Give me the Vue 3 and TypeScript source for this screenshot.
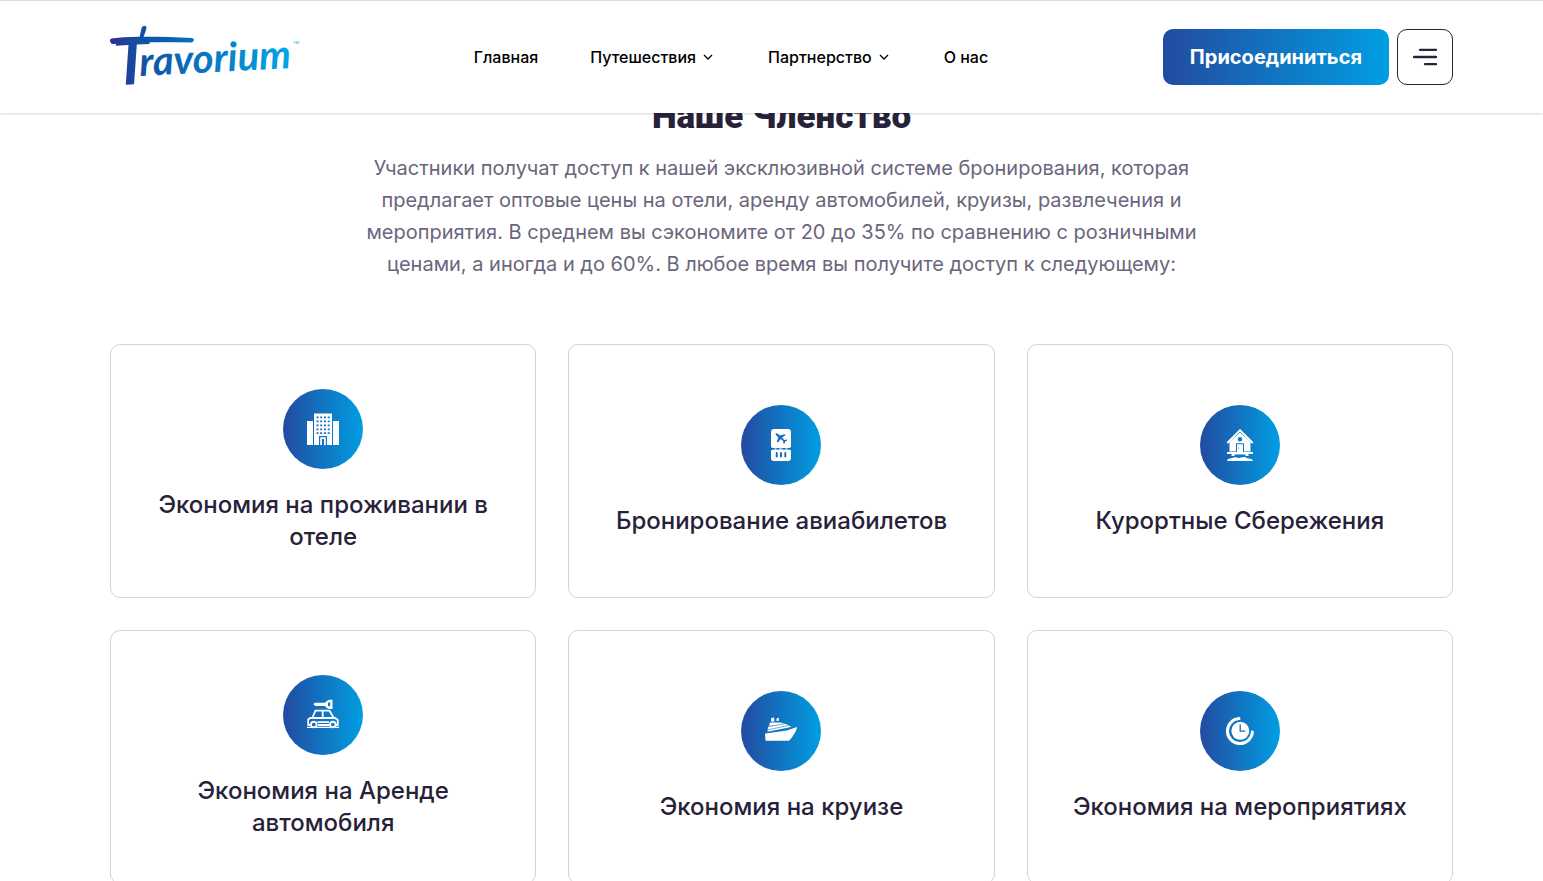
<script setup lang="ts">
interface NavItem {
  label: string
  menu: boolean
}

interface Benefit {
  title: string
  icon: 'hotel' | 'ticket' | 'resort' | 'car' | 'cruise' | 'events'
}

const navItems: NavItem[] = [
  { label: 'Главная', menu: false },
  { label: 'Путешествия', menu: true },
  { label: 'Партнерство', menu: true },
  { label: 'О нас', menu: false },
]

const benefits: Benefit[] = [
  { title: 'Экономия на проживании в отеле', icon: 'hotel' },
  { title: 'Бронирование авиабилетов', icon: 'ticket' },
  { title: 'Курортные Сбережения', icon: 'resort' },
  { title: 'Экономия на Аренде автомобиля', icon: 'car' },
  { title: 'Экономия на круизе', icon: 'cruise' },
  { title: 'Экономия на мероприятиях', icon: 'events' },
]
</script>

<template>
  <div class="page">
    <header class="header">
      <a class="logo" href="#" aria-label="Travorium">
        <svg width="189" height="96" viewBox="0 0 189 96" aria-hidden="true">
          <defs>
            <linearGradient id="brand" gradientUnits="userSpaceOnUse" x1="0" y1="0" x2="182" y2="0">
              <stop offset="0" stop-color="#2e3192" />
              <stop offset="0.2" stop-color="#0d55a6" />
              <stop offset="1" stop-color="#00a7e7" />
            </linearGradient>
          </defs>
          <path class="swash" d="M0 31 Q0 29 6 29 C30 27 55 28 82 29 Q86 30 82 33.500 C55 33 28 33 3 35 Q0 35 0 31z" />
          <path class="swash" d="M29 31 L31.500 19 Q34 15 36.500 18 L36 21 L32.500 31z" />
          <g class="wordmark" transform="rotate(-3 30 66)">
            <text class="initial" x="4" y="75">T</text>
            <text class="rest" x="30" y="67">ravorium</text>
          </g>
          <text class="mark" x="183" y="35">TM</text>
        </svg>
      </a>

      <nav class="nav" aria-label="Основное меню">
        <a v-for="item in navItems" :key="item.label" class="nav-link" href="#">
          {{ item.label }}
          <svg v-if="item.menu" class="chevron" width="16" height="16" viewBox="0 0 16 16" aria-hidden="true">
            <path d="M4 6 L8 10 L12 6" />
          </svg>
        </a>
      </nav>

      <div class="actions">
        <button class="join" type="button">Присоединиться</button>
        <button class="burger" type="button" aria-label="Меню">
          <svg width="24" height="24" viewBox="0 0 24 24" aria-hidden="true">
            <path stroke-width="2.300" d="M7 4.800 H23 M1 12 H23 M12 19.200 H23" />
          </svg>
        </button>
      </div>
    </header>

    <main class="membership">
      <h2 class="heading">Наше Членство</h2>
      <p class="lead">
        Участники получат доступ к нашей эксклюзивной системе бронирования, которая предлагает
        оптовые цены на отели, аренду автомобилей, круизы, развлечения и мероприятия. В среднем вы
        сэкономите от 20 до 35% по сравнению с розничными ценами, а иногда и до 60%. В любое время
        вы получите доступ к следующему:
      </p>

      <div class="grid">
        <article v-for="benefit in benefits" :key="benefit.icon" class="card">
          <div class="badge">
            <svg width="32" height="32" viewBox="0 0 32 32" aria-hidden="true">
              <g v-if="benefit.icon === 'hotel'">
                <path
                  fill="#fff"
                  fill-rule="evenodd"
                  d="M0 8h6v24H0z M26 8h6v24h-6z M7 .5h18V32h-5v-9h-8v9H7z M9.5 3.500v1.800h2v-1.800z M13.200 3.500v1.800h2v-1.800z M17 3.500v1.800h2v-1.800z M20.700 3.500v1.800h2v-1.800z M9.500 7.500v1.800h2v-1.800z M13.200 7.500v1.800h2v-1.800z M17 7.500v1.800h2v-1.800z M20.700 7.500v1.800h2v-1.800z M9.500 11.500v1.800h2v-1.800z M13.200 11.500v1.800h2v-1.800z M17 11.500v1.800h2v-1.800z M20.700 11.500v1.800h2v-1.800z M9.500 15.500v1.800h2v-1.800z M13.200 15.500v1.800h2v-1.800z M17 15.500v1.800h2v-1.800z M20.700 15.500v1.800h2v-1.800z M9.500 19.300v1.800h2v-1.800z M13.200 19.300v1.800h2v-1.800z M17 19.300v1.800h2v-1.800z M20.700 19.300v1.800h2v-1.800z"
                />
                <path fill="#fff" d="M13.200 24.300h5.600V32h-1.800v-6h-2v6h-1.800z" />
              </g>

              <g v-else-if="benefit.icon === 'ticket'">
                <path
                  fill="#fff"
                  d="M9 0h14a3 3 0 0 1 3 3v15.300a1.700 1.700 0 0 0-1.500 1.200H7.500A1.700 1.700 0 0 0 6 18.300V3a3 3 0 0 1 3-3z M6 21.200a1.700 1.700 0 0 0 1.500-.9h17a1.700 1.700 0 0 0 1.500.9V29a3 3 0 0 1-3 3H9a3 3 0 0 1-3-3z"
                />
                <path stroke="#0f6dbb" stroke-width="1.400" d="M6.500 19.800h3 M11.500 19.800h2.500 M17.500 19.800h3 M22.500 19.800h3" />
                <path
                  fill="#0f6dbb"
                  d="M10.600 4.200 Q12.300 4 13.500 5.200 L15 6.600 L19.500 5.300 L20.500 6.300 L17 8.600 L19.300 10.900 L21.700 10.600 L22.300 11.300 L20.300 12.500 L19.100 15 L18.300 14.300 L18.200 12.100 L15.700 9.900 L13 13.600 L11.900 12.700 L13.300 8.300 L11.700 6.800 Q10.400 5.500 10.600 4.200z"
                />
                <path stroke="#0f6dbb" stroke-width="1.900" stroke-linecap="round" d="M11.700 24v3.500 M16 24v3.500 M20.300 24v3.500" />
              </g>

              <g v-else-if="benefit.icon === 'resort'">
                <path
                  fill="#fff"
                  fill-rule="evenodd"
                  d="M16 3.500 L26.500 13 V22.500 H5.500 V13z M16 8a2.200 2.200 0 1 0 0 4.400a2.200 2.200 0 0 0 0-4.400z M12 14.200V22.500h8v-8.300z"
                />
                <path fill="none" stroke="#fff" stroke-width="1.900" stroke-linecap="round" d="M3.800 13.500 L16 1.300 L28.200 13.500" />
                <path fill="#fff" d="M13 15.200h6V23h-6z M3 23h26v2h-4.500v2h-3v-1.500h-11V27h-3v-2H3z" />
                <path fill="#fff" d="M3 32q0-1.800 2-2.200q2.500-.3 4-1q1.500-1 3-.5q2 .8 4 .5q3-1 5.500-.6q2 1.500 4.500 1.600q3 .4 3 2.200z" />
                <circle cx="14.600" cy="19" r=".6" fill="#0f6dbb" />
              </g>

              <g v-else-if="benefit.icon === 'car'">
                <path
                  fill="#fff"
                  fill-rule="evenodd"
                  d="M7.500 3.700H18 Q20 1 22.500 .7H25.500V10H22.500 Q20 10 18 7H8.500L6.500 5.500z M22.500 3.500h-1.500v3.800h2.200v-3.800z"
                />
                <path fill="none" stroke="#fff" stroke-width="1.800" stroke-linejoin="round" d="M5.500 18.500 L8.500 11.700 H22.500 L26.500 18.500 M15.700 12v6.500" />
                <path
                  fill="none"
                  stroke="#fff"
                  stroke-width="1.800"
                  stroke-linejoin="round"
                  d="M3 26H1.200v-5.500l2-1.500h25l2.600 2v5h-1.800 M11 26h11 M10.500 23.200h11.500"
                />
                <path stroke="#fff" stroke-width="1.300" d="M0 28.300h5 M9 28.300h14.500 M28 28.300h4" />
                <circle cx="6.800" cy="25.500" r="2.800" fill="#165fb0" stroke="#fff" stroke-width="1.900" />
                <circle cx="25.800" cy="25.500" r="2.800" fill="#0a83cd" stroke="#fff" stroke-width="1.900" />
              </g>

              <g v-else-if="benefit.icon === 'cruise'">
                <path fill="#fff" d="M0 18.500 L22 15.500 L32 12 C31.500 16 28.500 21 24 25.700 H.5z" />
                <path fill="#fff" d="M2.500 16.700 L3 11.500 L21 9 L26.500 12z M4 11 L5 7.500 H16 L21 9.300z M6 6.500 L6.300 3l2.700-.5.500 4z M11.500 3.500l2.500-.7-.5 3.200h-2z" />
                <path stroke="#117abf" stroke-width=".6" d="M2 11.800 L20 8.700 M2 15 L23 10.600 M1 17.900 L26 12.700" />
              </g>

              <g v-else>
                <path fill="none" stroke="#fff" stroke-width="3" stroke-linecap="round" d="M15 3.600 A12.500 12.500 0 1 0 28.400 17" />
                <circle cx="16.300" cy="15.800" r="9" fill="#fff" />
                <path fill="none" stroke="#0f6dbb" stroke-width="1.300" d="M16.200 9.500v6.700h5" />
              </g>
            </svg>
          </div>
          <h3 class="title">{{ benefit.title }}</h3>
        </article>
      </div>
    </main>
  </div>
</template>

<style>
body {
  margin: 0;
  background: #fff;
}
</style>

<style scoped>
.page {
  box-sizing: border-box;
  height: 100vh;
  overflow: hidden;
  font-family: Inter, 'Noto Sans', sans-serif;
  color: #272239;
}

.header {
  position: relative;
  z-index: 1;
  box-sizing: border-box;
  display: flex;
  align-items: center;
  justify-content: space-between;
  padding: 28px 90px 28px 110px;
  background: #fff;
  border-top: 1px solid #dedede;
  box-shadow: 0 0 3px rgba(0, 0, 0, 0.3);
}

.logo {
  display: flex;
  margin: -20px 0;
}

.logo svg {
  overflow: visible;
}

.swash {
  fill: url(#brand);
}

.wordmark {
  fill: url(#brand);
  font-family: Lato, sans-serif;
  font-style: italic;
  font-weight: 700;
}

.initial {
  font-size: 64px;
}

.rest {
  font-size: 40px;
}

.mark {
  fill: #00a7e7;
  font-size: 4px;
}

.nav {
  display: flex;
  gap: 52px;
}

.nav-link {
  display: flex;
  align-items: center;
  gap: 4px;
  color: #000;
  font-size: 16px;
  font-weight: 500;
  line-height: 24px;
  text-decoration: none;
  white-space: nowrap;
}

.chevron {
  fill: none;
  stroke: currentColor;
  stroke-width: 1.3;
}

.actions {
  display: flex;
  gap: 8px;
}

.join {
  height: 56px;
  padding: 0 27px;
  border: 0;
  border-radius: 10px;
  background: linear-gradient(90deg, #224ba1, #009ee2);
  color: #fff;
  font-family: inherit;
  font-size: 20px;
  font-weight: 700;
  line-height: 24px;
}

.burger {
  display: flex;
  align-items: center;
  justify-content: center;
  width: 56px;
  height: 56px;
  padding: 0;
  border: 1px solid #272239;
  border-radius: 10px;
  background: #fff;
}

.burger path {
  stroke: #272239;
  stroke-linecap: round;
}

.membership {
  display: flex;
  flex-direction: column;
  align-items: center;
  padding: 0 90px 32px 110px;
}

.heading {
  margin: -20px 0 0;
  font-family: Roboto, sans-serif;
  font-size: 35px;
  font-weight: 900;
  line-height: 48px;
}

.lead {
  max-width: 850px;
  margin: 11px 0 64px;
  color: #6a667c;
  font-size: 20px;
  line-height: 32px;
  text-align: center;
}

.grid {
  display: grid;
  grid-template-columns: repeat(3, 1fr);
  gap: 32px;
  width: 100%;
}

.card {
  display: flex;
  flex-direction: column;
  align-items: center;
  justify-content: center;
  gap: 20px;
  padding: 44px;
  border: 1px solid #d3d2d6;
  border-radius: 10px;
}

.badge {
  display: flex;
  align-items: center;
  justify-content: center;
  width: 80px;
  height: 80px;
  border-radius: 50%;
  background: linear-gradient(90deg, #224ba1, #009ee2);
}

.title {
  margin: 0;
  font-size: 24px;
  font-weight: 500;
  line-height: 32px;
  text-align: center;
}
</style>
